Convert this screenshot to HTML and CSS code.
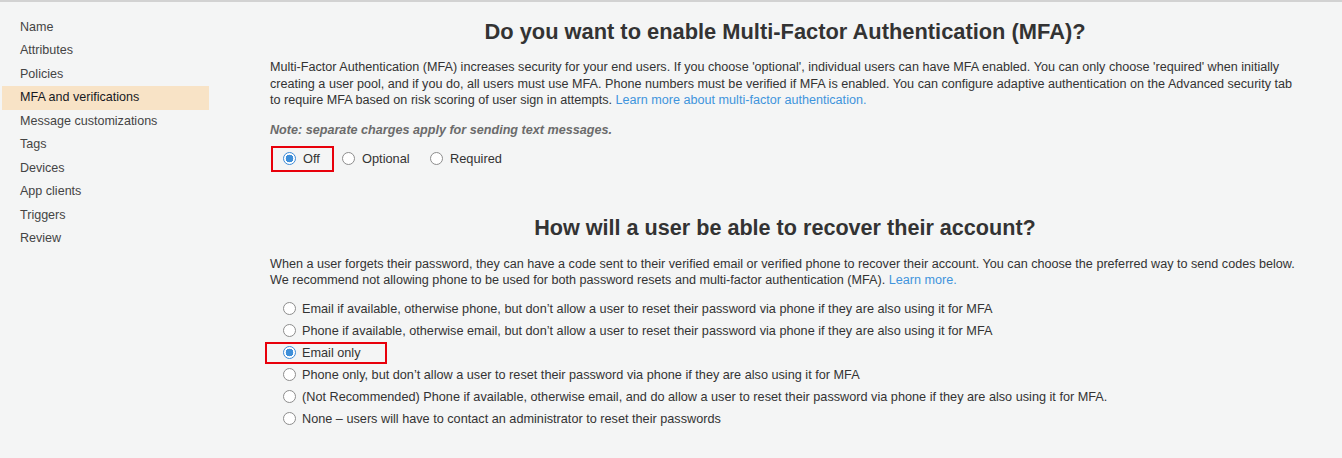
FILE: index.html
```html
<!DOCTYPE html>
<html lang="en">
<head>
<meta charset="utf-8">
<title>MFA and verifications</title>
<link rel="stylesheet" href="styles.css">
</head>
<body>
<div class="page">
  <nav class="sidebar">
    <a class="nav-item">Name</a>
    <a class="nav-item">Attributes</a>
    <a class="nav-item">Policies</a>
    <a class="nav-item active">MFA and verifications</a>
    <a class="nav-item">Message customizations</a>
    <a class="nav-item">Tags</a>
    <a class="nav-item">Devices</a>
    <a class="nav-item">App clients</a>
    <a class="nav-item">Triggers</a>
    <a class="nav-item">Review</a>
  </nav>
  <main class="content">
    <h1 class="title">Do you want to enable Multi-Factor Authentication (MFA)?</h1>
    <p class="desc">Multi-Factor Authentication (MFA) increases security for your end users. If you choose 'optional', individual users can have MFA enabled. You can only choose 'required' when initially creating a user pool, and if you do, all users must use MFA. Phone numbers must be verified if MFA is enabled. You can configure adaptive authentication on the Advanced security tab to require MFA based on risk scoring of user sign in attempts. <a class="link">Learn more about multi-factor authentication.</a></p>
    <p class="note">Note: separate charges apply for sending text messages.</p>
    <div class="mfa-group">
      <label class="mfa-opt mfa-off marked"><span class="radio checked"></span>Off</label>
      <label class="mfa-opt mfa-optional"><span class="radio"></span>Optional</label>
      <label class="mfa-opt"><span class="radio"></span>Required</label>
    </div>

    <h2 class="title title-2">How will a user be able to recover their account?</h2>
    <p class="desc desc-2">When a user forgets their password, they can have a code sent to their verified email or verified phone to recover their account. You can choose the preferred way to send codes below. We recommend not allowing phone to be used for both password resets and multi-factor authentication (MFA). <a class="link">Learn more.</a></p>
    <div class="options">
      <label class="option"><span class="radio"></span>Email if available, otherwise phone, but don’t allow a user to reset their password via phone if they are also using it for MFA</label>
      <label class="option"><span class="radio"></span>Phone if available, otherwise email, but don’t allow a user to reset their password via phone if they are also using it for MFA</label>
      <label class="option option-marked"><span class="radio checked"></span>Email only</label>
      <label class="option"><span class="radio"></span>Phone only, but don’t allow a user to reset their password via phone if they are also using it for MFA</label>
      <label class="option"><span class="radio"></span>(Not Recommended) Phone if available, otherwise email, and do allow a user to reset their password via phone if they are also using it for MFA.</label>
      <label class="option"><span class="radio"></span>None – users will have to contact an administrator to reset their passwords</label>
    </div>
  </main>
</div>
</body>
</html>
```

FILE: styles.css
```css
* { box-sizing: border-box; }

html, body {
  margin: 0;
  padding: 0;
  background: #f4f5f5;
}

body {
  border-top: 2px solid #d2d2d2;
  font-family: "Liberation Sans", Arial, sans-serif;
  color: #333;
  height: 458px;
  overflow: hidden;
}

.page {
  display: flex;
  align-items: flex-start;
}

.sidebar {
  width: 270px;
  flex: none;
  padding-top: 13.6px;
  display: flex;
  flex-direction: column;
}

.nav-item {
  display: block;
  margin-left: 2px;
  width: 207px;
  padding-left: 18px;
  height: 23.5px;
  line-height: 23.5px;
  font-size: 12.55px;
  color: #444;
}

.nav-item.active {
  background: #f8e3c6;
  color: #16191f;
}

.content {
  width: 1030px;
  padding-top: 16px;
}

.title {
  margin: 0;
  font-size: 21.85px;
  line-height: 28px;
  font-weight: bold;
  text-align: center;
  color: #333;
}

.title-2 {
  margin-top: 42px;
  font-size: 21.6px;
}

.desc {
  margin: 13px 0 0;
  font-size: 12.62px;
  line-height: 16.5px;
  color: #333;
}

.desc-2 { margin-top: 14px; }

.link { color: #3f94dc; }

.note {
  margin: 13.5px 0 0;
  font-size: 12.62px;
  line-height: 16.5px;
  font-weight: bold;
  font-style: italic;
  color: #6b6b6b;
}

.mfa-group {
  margin-top: 7px;
  display: flex;
  align-items: center;
  height: 26px;
}

.mfa-opt {
  display: flex;
  align-items: center;
  font-size: 12.8px;
  height: 26px;
}

.mfa-off {
  margin-left: 1px;
  width: 63px;
  padding-left: 10px;
  border: 2px solid #e8000b;
}

.mfa-optional { margin-left: 8px; width: 88px; }

.radio {
  flex: none;
  width: 13px;
  height: 13px;
  margin-right: 7px;
  border: 1px solid #8d8d8d;
  border-radius: 50%;
  background: #fff;
}

.radio.checked {
  border-color: #3c8ad6;
  background: radial-gradient(circle, #3e8fd9 0 3.6px, #fff 4.1px);
}

.options {
  margin-top: 9px;
  display: flex;
  flex-direction: column;
}

.option {
  display: flex;
  align-items: center;
  height: 22px;
  padding-left: 12.5px;
  font-size: 12.7px;
  color: #333;
}

.option .radio { margin-right: 6.5px; }

.option-marked {
  margin-left: -5px;
  width: 122px;
  padding-left: 15.5px;
  border: 2px solid #e8000b;
}
```
